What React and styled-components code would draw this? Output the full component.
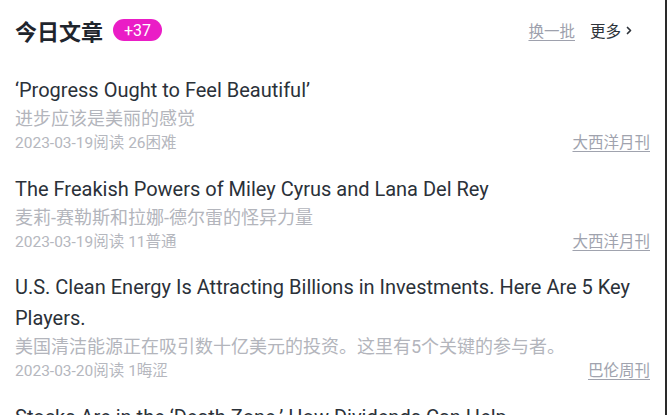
import React from "react";
import styled, { createGlobalStyle } from "styled-components";

const GlobalStyle = createGlobalStyle`
    html, body {
        margin: 0;
        padding: 0;
        background: #ffffff;
        overflow: hidden;
    }
    body {
        font-family: Roboto, "Noto Sans CJK SC", sans-serif;
    }
`;

const Page = styled.div`
    width: 667px;
    height: 415px;
    box-sizing: border-box;
    border-right: 2px solid #2a2a2a;
    padding: 0 15px 0 15px;
    overflow: hidden;
`;

const Header = styled.div`
    display: flex;
    align-items: center;
    justify-content: space-between;
    height: 60px;
`;

const TitleGroup = styled.div`
    display: flex;
    align-items: center;
    gap: 10px;
`;

const Heading = styled.h2`
    margin: 0;
    font-size: 22px;
    font-weight: 700;
    color: #1f252d;
`;

const Badge = styled.span`
    display: inline-flex;
    align-items: center;
    justify-content: center;
    height: 22px;
    padding: 0 11px;
    border-radius: 11px;
    background: #ea1dc6;
    color: #ffffff;
    font-size: 16px;
`;

const Actions = styled.div`
    display: flex;
    align-items: center;
    gap: 15px;
    padding-right: 18px;
    font-size: 15.5px;
`;

const Refresh = styled.a`
    color: #9ea1ad;
    text-decoration: underline;
    text-underline-offset: 3px;
`;

const More = styled.a`
    color: #2e333a;
    display: inline-flex;
    align-items: center;
    gap: 5px;
`;

const List = styled.div`
    display: flex;
    flex-direction: column;
    gap: 19.5px;
    padding-top: 15px;
`;

const Item = styled.div`
    display: flex;
    flex-direction: column;
`;

const Title = styled.div`
    font-size: 20px;
    line-height: 31px;
    color: #2b3139;
`;

const Subtitle = styled.div`
    font-size: 18px;
    line-height: 26px;
    color: #b3b5bc;
`;

const Meta = styled.div`
    display: flex;
    justify-content: space-between;
    align-items: center;
    font-size: 15.5px;
    line-height: 22px;
    color: #b5b7be;
`;

const Source = styled.a`
    color: #a0a3ae;
    text-decoration: underline;
    text-underline-offset: 3px;
`;

const articles = [
    {
        title: "‘Progress Ought to Feel Beautiful’",
        zh: "进步应该是美丽的感觉",
        date: "2023-03-19",
        reads: 26,
        level: "困难",
        source: "大西洋月刊",
    },
    {
        title: "The Freakish Powers of Miley Cyrus and Lana Del Rey",
        zh: "麦莉-赛勒斯和拉娜-德尔雷的怪异力量",
        date: "2023-03-19",
        reads: 11,
        level: "普通",
        source: "大西洋月刊",
    },
    {
        title: "U.S. Clean Energy Is Attracting Billions in Investments. Here Are 5 Key Players.",
        zh: "美国清洁能源正在吸引数十亿美元的投资。这里有5个关键的参与者。",
        date: "2023-03-20",
        reads: 1,
        level: "晦涩",
        source: "巴伦周刊",
    },
    {
        title: "Stocks Are in the ‘Death Zone.’ How Dividends Can Help.",
        zh: "股市处于“死亡区”。股息如何提供帮助。",
        date: "2023-03-20",
        reads: 3,
        level: "普通",
        source: "巴伦周刊",
    },
];

const Chevron = () => (
    <svg width="6" height="9" viewBox="0 0 6 9" fill="none">
        <path d="M1.5 1.5L4.5 4.5L1.5 7.5" stroke="#2e333a" strokeWidth="1.7" strokeLinecap="round" strokeLinejoin="round" />
    </svg>
);

export default function App() {
    return (
        <Page>
            <GlobalStyle />
            <Header>
                <TitleGroup>
                    <Heading>今日文章</Heading>
                    <Badge>+37</Badge>
                </TitleGroup>
                <Actions>
                    <Refresh>换一批</Refresh>
                    <More>
                        更多
                        <Chevron />
                    </More>
                </Actions>
            </Header>
            <List>
                {articles.map((a) => (
                    <Item key={a.title}>
                        <Title>{a.title}</Title>
                        <Subtitle>{a.zh}</Subtitle>
                        <Meta>
                            <span>
                                {a.date}阅读 {a.reads}
                                {a.level}
                            </span>
                            <Source>{a.source}</Source>
                        </Meta>
                    </Item>
                ))}
            </List>
        </Page>
    );
}
